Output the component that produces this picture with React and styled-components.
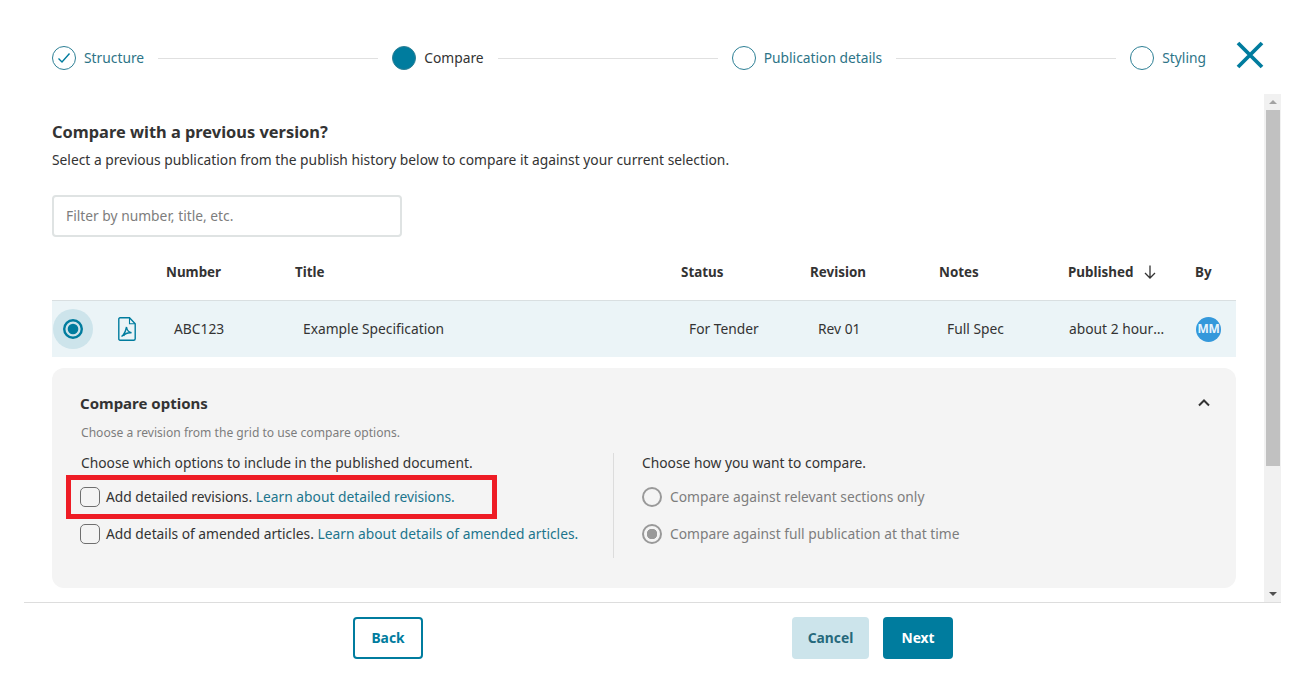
import React from "react";
import styled, { createGlobalStyle } from "styled-components";

const teal = "#007c9e";
const text = "#333333";
const muted = "#7d7d7d";
const font = `"Noto Sans", "Open Sans", sans-serif`;

const GlobalStyle = createGlobalStyle`
  * { box-sizing: border-box; }
  html, body { margin: 0; height: 100%; background: #fff; overflow: hidden; }
  body { font-family: ${font}; font-size: 13.8px; line-height: 20px; color: ${text}; }
`;

const steps = [
  { label: "Structure", state: "done" },
  { label: "Compare", state: "current" },
  { label: "Publication details", state: "todo" },
  { label: "Styling", state: "todo" },
];

const columns = [
  { label: "Number" },
  { label: "Title" },
  { label: "Status" },
  { label: "Revision" },
  { label: "Notes" },
  { label: "Published", sorted: true },
  { label: "By" },
];

const CheckIcon = () => (
  <svg width="14" height="12" viewBox="0 0 14 12" fill="none">
    <path d="M1.5 6.5 5 10 12.5 1.5" stroke={teal} strokeWidth="1.4" />
  </svg>
);

const CloseIcon = () => (
  <svg width="28" height="28" viewBox="0 0 28 28" fill="none">
    <path d="M2 2 26 26M26 2 2 26" stroke={teal} strokeWidth="3.8" />
  </svg>
);

const PdfIcon = () => (
  <svg width="18" height="24" viewBox="0 0 18 24" fill="none">
    <path
      d="M2 .8h9.500l5.700 5.900v15a1.500 1.500 0 0 1-1.500 1.500H2A1.200 1.200 0 0 1 .8 22V2A1.200 1.200 0 0 1 2 .8Z"
      stroke={teal}
      strokeWidth="1.4"
    />
    <path d="M11.500 1v5.700h5.500" stroke={teal} strokeWidth="1.100" />
    <path
      d="M3.500 19.500c2.200-1.500 4-4.500 5-9.500.4 2.800 1.800 5 5 5.800-3.200-.3-6.500.9-8 3"
      stroke={teal}
      strokeWidth="1.400"
    />
  </svg>
);

const SelectedRadioIcon = () => (
  <svg width="20" height="20" viewBox="0 0 20 20" fill="none">
    <circle cx="10" cy="10" r="8.800" stroke={teal} strokeWidth="2.400" />
    <circle cx="10" cy="10" r="5.300" fill={teal} />
  </svg>
);

const SortIcon = () => (
  <svg width="12" height="14" viewBox="0 0 12 14" fill="none">
    <path d="M6 .5v12.500M1 8l5 5 5-5" stroke={text} strokeWidth="1.3" />
  </svg>
);

const ChevronIcon = () => (
  <svg width="12" height="8" viewBox="0 0 12 8" fill="none">
    <path d="M1 6.500 6 1.500l5 5" stroke={text} strokeWidth="2" />
  </svg>
);

const App = () => {
  return (
    <>
      <GlobalStyle />
      <Shell>
        <Header>
          <Stepper>
            {steps.map((step, i) => (
              <React.Fragment key={step.label}>
                {i > 0 && <StepLine />}
                <StepDot $state={step.state}>
                  {step.state === "done" && <CheckIcon />}
                </StepDot>
                <StepLabel $state={step.state}>{step.label}</StepLabel>
              </React.Fragment>
            ))}
          </Stepper>
          <CloseButton aria-label="Close">
            <CloseIcon />
          </CloseButton>
        </Header>

        <Body>
          <Content>
            <Heading>Compare with a previous version?</Heading>
            <Intro>
              Select a previous publication from the publish history below to compare it against your current selection.
            </Intro>
            <Filter placeholder="Filter by number, title, etc." />

            <HeadRow>
              <span />
              {columns.map((col) => (
                <HeadCell key={col.label}>
                  {col.label}
                  {col.sorted && <SortIcon />}
                </HeadCell>
              ))}
            </HeadRow>

            <DataRow>
              <SelectCell>
                <RadioHalo>
                  <SelectedRadioIcon />
                </RadioHalo>
                <PdfIcon />
              </SelectCell>
              <Cell>ABC123</Cell>
              <Cell>Example Specification</Cell>
              <Cell>For Tender</Cell>
              <Cell>Rev 01</Cell>
              <Cell>Full Spec</Cell>
              <Cell $tight>about 2 hours ago</Cell>
              <Cell $tight>
                <Avatar>MM</Avatar>
              </Cell>
            </DataRow>

            <Panel>
              <PanelHead>
                <PanelTitle>Compare options</PanelTitle>
                <ChevronIcon />
              </PanelHead>
              <PanelHint>Choose a revision from the grid to use compare options.</PanelHint>
              <OptionColumns>
                <OptionColumn>
                  <OptionIntro>Choose which options to include in the published document.</OptionIntro>
                  <HighlightedOption>
                    <Checkbox type="checkbox" />
                    <span>
                      Add detailed revisions. <Link>Learn about detailed revisions.</Link>
                    </span>
                    <Highlight />
                  </HighlightedOption>
                  <Option>
                    <Checkbox type="checkbox" />
                    <span>
                      Add details of amended articles. <Link>Learn about details of amended articles.</Link>
                    </span>
                  </Option>
                </OptionColumn>
                <RightColumn>
                  <OptionIntro>Choose how you want to compare.</OptionIntro>
                  <RadioOption>
                    <Radio type="radio" name="compare" disabled />
                    Compare against relevant sections only
                  </RadioOption>
                  <RadioOption>
                    <Radio type="radio" name="compare" disabled defaultChecked />
                    Compare against full publication at that time
                  </RadioOption>
                </RightColumn>
              </OptionColumns>
            </Panel>
          </Content>

          <Scrollbar>
            <ScrollArrow $up />
            <ScrollThumb />
            <ScrollArrow />
          </Scrollbar>
        </Body>

        <Footer>
          <OutlineButton>Back</OutlineButton>
          <FooterActions>
            <SoftButton>Cancel</SoftButton>
            <SolidButton>Next</SolidButton>
          </FooterActions>
        </Footer>
      </Shell>
    </>
  );
};

const Shell = styled.div`
  width: 1303px;
  height: 674px;
  padding: 0 22px 0 24px;
  overflow: hidden;
`;

const Header = styled.header`
  display: flex;
  align-items: center;
  height: 94px;
  padding: 22px 17px 0 28px;
`;

const Stepper = styled.div`
  flex: 1;
  display: flex;
  align-items: center;
`;

const StepDot = styled.span`
  flex: none;
  display: flex;
  align-items: center;
  justify-content: center;
  width: 24px;
  height: 24px;
  border-radius: 50%;
  border: 1px solid #2d7f95;
  background: ${(p) => (p.$state === "current" ? teal : "transparent")};
`;

const StepLabel = styled.span`
  margin-left: 8px;
  white-space: nowrap;
  color: ${(p) => (p.$state === "current" ? text : "#2d7487")};
`;

const StepLine = styled.span`
  flex: 1;
  height: 1px;
  margin: 0 14px;
  background: #e0e0e0;
`;

const CloseButton = styled.button`
  flex: none;
  display: flex;
  width: 28px;
  height: 28px;
  margin: -6px 0 0 30px;
  padding: 0;
  border: 0;
  background: none;
`;

const Body = styled.div`
  display: flex;
  height: 508px;
`;

const Content = styled.main`
  flex: 1;
  min-width: 0;
  padding: 28px 28px 0;
`;

const Heading = styled.h1`
  margin: 0;
  font-size: 16.400px;
  line-height: 20px;
  font-weight: 700;
`;

const Intro = styled.p`
  margin: 8px 0 0;
`;

const Filter = styled.input`
  display: block;
  width: 350px;
  height: 42px;
  margin-top: 25px;
  padding: 0 12px 2px;
  border: 2px solid #dfe3e3;
  border-radius: 4px;
  font-family: ${font};
  font-size: 13.800px;
  color: ${text};
  outline: none;

  &::placeholder {
    color: #7d7d7d;
    opacity: 1;
  }
`;

const tableColumns = "114px 129px 386px 129px 129px 129px 127px 41px";

const HeadRow = styled.div`
  display: grid;
  grid-template-columns: ${tableColumns};
  align-items: center;
  margin-top: 21px;
  height: 43px;
  padding-bottom: 15px;
  border-bottom: 1px solid #d9dfe1;
`;

const HeadCell = styled.div`
  display: flex;
  align-items: center;
  gap: 11px;
  font-size: 13.400px;
  font-weight: 700;
`;

const DataRow = styled.div`
  display: grid;
  grid-template-columns: ${tableColumns};
  align-items: center;
  height: 56px;
  background: #ebf4f7;
`;

const SelectCell = styled.div`
  display: flex;
  align-items: center;
  gap: 25px;
  padding-left: 1px;
`;

const RadioHalo = styled.span`
  display: flex;
  align-items: center;
  justify-content: center;
  width: 40px;
  height: 40px;
  border-radius: 50%;
  background: #cde4eb;
`;

const Cell = styled.div`
  padding-left: ${(p) => (p.$tight ? "1px" : "8px")};
  padding-right: ${(p) => (p.$tight ? "30px" : "8px")};
  white-space: nowrap;
  overflow: hidden;
  text-overflow: ellipsis;

  &:last-child {
    padding-right: 0;
    overflow: visible;
  }
`;

const Avatar = styled.span`
  display: flex;
  align-items: center;
  justify-content: center;
  width: 25px;
  height: 25px;
  border-radius: 50%;
  background: #3498db;
  color: #e8f3fb;
  font-size: 12px;
  font-weight: 700;
  letter-spacing: -0.3px;
`;

const Panel = styled.section`
  height: 220px;
  margin-top: 11px;
  padding: 25px 26px 0 28px;
  border-radius: 12px;
  background: #f4f4f4;
`;

const PanelHead = styled.div`
  display: flex;
  align-items: center;
  justify-content: space-between;
`;

const PanelTitle = styled.h2`
  margin: 0;
  font-size: 15px;
  line-height: 20px;
  font-weight: 700;
`;

const PanelHint = styled.p`
  margin: 10px 0 0;
  padding-left: 1px;
  font-size: 12.100px;
  color: ${muted};
`;

const OptionColumns = styled.div`
  display: grid;
  grid-template-columns: 533px 1fr;
  height: 105px;
  margin-top: 10px;
`;

const OptionColumn = styled.div`
  min-width: 0;
`;

const RightColumn = styled.div`
  padding-left: 27px;
  border-left: 1px solid #dcdcdc;
`;

const OptionIntro = styled.p`
  margin: 0 0 5px;
  padding-left: 1px;
  white-space: nowrap;
`;

const Option = styled.label`
  display: flex;
  align-items: center;
  gap: 6px;
  height: 37px;
  white-space: nowrap;
`;

const HighlightedOption = styled(Option)`
  position: relative;
`;

const Highlight = styled.span`
  position: absolute;
  top: -3px;
  left: -14px;
  width: 431px;
  height: 44px;
  border: 5px solid #ee1c25;
  pointer-events: none;
`;

const Checkbox = styled.input`
  appearance: none;
  flex: none;
  width: 20px;
  height: 20px;
  margin: 0;
  border: 1px solid #6f6f6f;
  border-radius: 5px;
  background: transparent;
`;

const Link = styled.a`
  color: #1c758d;
`;

const RadioOption = styled.label`
  display: flex;
  align-items: center;
  gap: 8px;
  height: 37px;
  padding-left: 1px;
  color: ${muted};
  white-space: nowrap;
`;

const Radio = styled.input`
  appearance: none;
  flex: none;
  width: 20px;
  height: 20px;
  margin: 0;
  border: 2px solid #999;
  border-radius: 50%;

  &:checked {
    background: radial-gradient(circle, #999 0 5px, transparent 5.5px);
  }
`;

const Scrollbar = styled.div`
  flex: none;
  display: flex;
  flex-direction: column;
  width: 17px;
  background: #f1f1f1;
`;

const ScrollArrow = styled.div`
  flex: none;
  display: flex;
  align-items: center;
  justify-content: center;
  height: 16px;
  margin-top: ${(p) => (p.$up ? "0" : "auto")};

  &::before {
    content: "";
    border-left: 4px solid transparent;
    border-right: 4px solid transparent;
    border-${(p) => (p.$up ? "bottom" : "top")}: 4px solid ${(p) => (p.$up ? "#a3a3a3" : "#505050")};
  }
`;

const ScrollThumb = styled.div`
  flex: none;
  width: 14px;
  height: 356px;
  margin-left: 2px;
  background: #c1c1c1;
`;

const Footer = styled.footer`
  display: flex;
  align-items: flex-start;
  justify-content: space-between;
  height: 72px;
  padding: 14px 328px 0 329px;
  border-top: 1px solid #dddddd;
`;

const FooterActions = styled.div`
  display: flex;
  gap: 14px;
`;

const BaseButton = styled.button`
  height: 42px;
  padding: 0 0 2px;
  border: 0;
  border-radius: 4px;
  font-family: ${font};
  font-size: 13.800px;
  font-weight: 700;
`;

const OutlineButton = styled(BaseButton)`
  width: 70px;
  border: 2px solid ${teal};
  background: #fff;
  color: ${teal};
`;

const SoftButton = styled(BaseButton)`
  width: 77px;
  background: #cce4eb;
  color: #26697c;
`;

const SolidButton = styled(BaseButton)`
  width: 70px;
  background: ${teal};
  color: #fff;
`;

export default App;
